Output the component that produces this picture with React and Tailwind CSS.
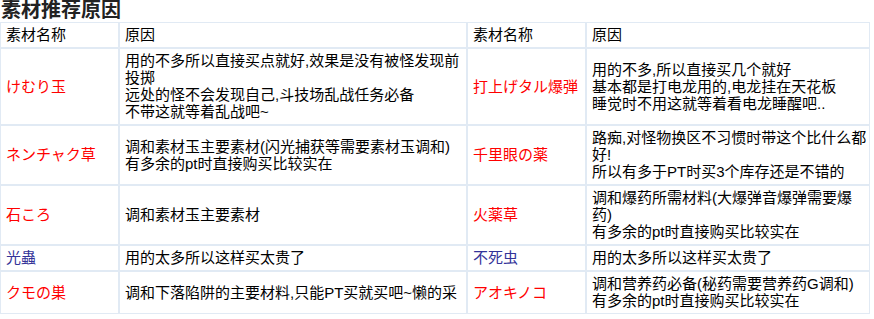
import React from 'react';

// 素材推荐表的数据：每行左右两组
const rows = [
  {
    left: { name: 'けむり玉', color: 'red', lines: ['用的不多所以直接买点就好,效果是没有被怪发现前', '投掷', '远处的怪不会发现自己,斗技场乱战任务必备', '不带这就等着乱战吧~'] },
    right: { name: '打上げタル爆弾', color: 'red', lines: ['用的不多,所以直接买几个就好', '基本都是打电龙用的,电龙挂在天花板', '睡觉时不用这就等着看电龙睡醒吧..'] },
  },
  {
    left: { name: 'ネンチャク草', color: 'red', lines: ['调和素材玉主要素材(闪光捕获等需要素材玉调和)', '有多余的pt时直接购买比较实在'] },
    right: { name: '千里眼の薬', color: 'red', lines: ['路痴,对怪物换区不习惯时带这个比什么都', '好!', '所以有多于PT时买3个库存还是不错的'] },
  },
  {
    left: { name: '石ころ', color: 'red', lines: ['调和素材玉主要素材'] },
    right: { name: '火薬草', color: 'red', lines: ['调和爆药所需材料(大爆弹音爆弹需要爆', '药)', '有多余的pt时直接购买比较实在'] },
  },
  {
    left: { name: '光蟲', color: 'blue', lines: ['用的太多所以这样买太贵了'] },
    right: { name: '不死虫', color: 'blue', lines: ['用的太多所以这样买太贵了'] },
  },
  {
    left: { name: 'クモの巣', color: 'red', lines: ['调和下落陷阱的主要材料,只能PT买就买吧~懒的采'] },
    right: { name: 'アオキノコ', color: 'red', lines: ['调和营养药必备(秘药需要营养药G调和)', '有多余的pt时直接购买比较实在'] },
  },
];

const cell = 'border border-[#e1eaf4] px-[5px] pt-[3px] pb-[4px] align-middle text-left font-normal';

const NameCell = ({ item }) => (
  <td className={`${cell} whitespace-nowrap ${item.color === 'red' ? 'text-[#ff0000]' : 'text-[#333399]'}`}>
    {item.name}
  </td>
);

const ReasonCell = ({ item }) => (
  <td className={`${cell} whitespace-nowrap text-black`}>
    {item.lines.map((line, i) => (
      <React.Fragment key={i}>
        {i > 0 && <br />}
        {line}
      </React.Fragment>
    ))}
  </td>
);

const App = () => {
  return (
    <div className="w-[874px] h-[319px] bg-white overflow-hidden font-['Liberation_Sans','Noto_Sans_CJK_SC',sans-serif] text-[15px] leading-[17px]">
      {/* 标题 */}
      <h2 className="h-[22px] pl-[1px] text-[20px] leading-[21px] font-bold text-[#222]">素材推荐原因</h2>

      {/* 表格 */}
      <table className="w-[870px] table-fixed border-separate border-spacing-0">
        <colgroup>
          <col className="w-[119px]" />
          <col className="w-[348px]" />
          <col className="w-[119px]" />
          <col className="w-[284px]" />
        </colgroup>
        <thead>
          <tr className="text-black">
            <th className={cell}>素材名称</th>
            <th className={cell}>原因</th>
            <th className={cell}>素材名称</th>
            <th className={cell}>原因</th>
          </tr>
        </thead>
        <tbody>
          {rows.map((row, index) => (
            <tr key={index}>
              <NameCell item={row.left} />
              <ReasonCell item={row.left} />
              <NameCell item={row.right} />
              <ReasonCell item={row.right} />
            </tr>
          ))}
        </tbody>
      </table>
    </div>
  );
};

export default App;
